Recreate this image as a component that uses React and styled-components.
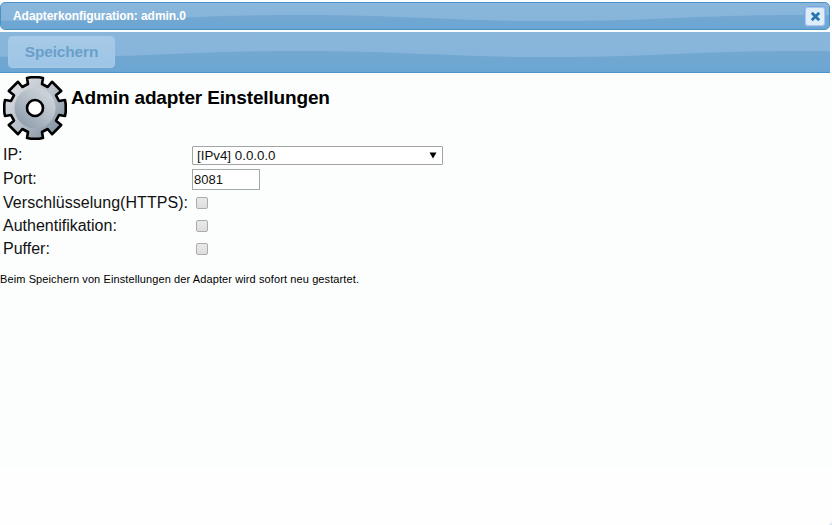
import React from "react";
import styled, { createGlobalStyle, css } from "styled-components";

const GlobalStyle = createGlobalStyle`
  * { box-sizing: border-box; }
  html, body { margin: 0; padding: 0; background: #fcfefd; overflow: hidden; }
  body { font-family: "Liberation Sans", Arial, sans-serif; color: #111; }
`;

const Dialog = styled.div`
  position: relative;
  display: flex;
  flex-direction: column;
  width: 832px;
  height: 525px;
  padding-top: 2px;
  background: linear-gradient(#fcfefd 465px, #fefefe 475px);
`;

const barSurface = css`
  position: relative;
  isolation: isolate;
  overflow: hidden;
  width: 830px;
  flex: none;
  display: flex;
  align-items: center;
  background: linear-gradient(#8ab6db, #85b4da);
`;

const TitleBar = styled.header`
  ${barSurface}
  height: 28px;
  border: 1px solid #4b92c5;
  border-radius: 5px;
  padding: 0 4px 0 12px;
  justify-content: space-between;
`;

const Toolbar = styled.div`
  ${barSurface}
  height: 41px;
  margin-top: 2px;
  padding: 0 8px;
  border-bottom: 1px solid #4d93c5;
`;

const WaveSvg = styled.svg`
  position: absolute;
  z-index: -1;
  left: 0;
  top: 0;
`;

const Title = styled.span`
  font-size: 12px;
  line-height: 14px;
  font-weight: bold;
  letter-spacing: -0.06px;
  color: #fff;
`;

const CloseButton = styled.button`
  width: 22px;
  height: 21px;
  margin: 0 -1px 0 0;
  padding: 0;
  display: flex;
  align-items: center;
  justify-content: center;
  border: 1px solid #7ba4e4;
  border-radius: 4px;
  background: #deedf8;
  box-shadow: inset 0 0 0 1px #a9c8f0;
`;

const SaveButton = styled.button`
  width: 107px;
  height: 32px;
  padding: 0;
  border: 1px solid #a4c9e8;
  border-radius: 4px;
  background: linear-gradient(#a6cae7, #9ec5e6);
  color: #6a9fca;
  font: bold 15.5px/18px "Liberation Sans", Arial, sans-serif;
  letter-spacing: -0.15px;
`;

const Heading = styled.div`
  display: flex;
  height: 70px;
  padding: 3px 0 0 3px;
`;

const HeadingText = styled.h1`
  margin: 11px 0 0 4px;
  font-size: 19px;
  line-height: 22px;
  font-weight: bold;
  letter-spacing: -0.15px;
  white-space: nowrap;
  color: #000;
`;

const Form = styled.form`
  display: grid;
  grid-template-columns: 189px 260px;
  grid-template-rows: 24px 24px 23px 23px 23px;
  align-items: center;
  padding-left: 3px;
`;

const Label = styled.label`
  font-size: 16px;
  line-height: 20px;
  white-space: nowrap;
  letter-spacing: ${({ $tracking = 0 }) => $tracking}px;
`;

const SelectBox = styled.div`
  display: flex;
  align-items: center;
  justify-content: space-between;
  width: 251px;
  height: 19px;
  padding: 0 5px 0 4px;
  border: 1px solid #a3a5a4;
  border-radius: 1px;
  background: #fff;
  font-size: 13.33px;
`;

const PortInput = styled.input`
  width: 68px;
  height: 21px;
  margin: 1px 0 0;
  padding: 0 1px;
  border: 1px solid #a4aaa8;
  background: #fff;
  color: #111;
  font: 13px "Liberation Sans", Arial, sans-serif;
`;

const Checkbox = styled.input.attrs({ type: "checkbox" })`
  appearance: none;
  width: 12px;
  height: 12px;
  margin: 1px 0 0 4px;
  border: 1px solid #acacac;
  border-radius: 2px;
  background: linear-gradient(#e9e9e9, #dedede);
`;

const Note = styled.p`
  margin: 12px 0 0;
  font-size: 11px;
  line-height: 14px;
  letter-spacing: 0.105px;
  color: #000;
`;

const ResizeGrip = styled.span`
  position: absolute;
  right: 0;
  bottom: 0;
  width: 4px;
  height: 4px;
  background: linear-gradient(135deg, transparent 45%, #b8d7e8);
`;

function Wave({ id, height, crest, trough }) {
  const d =
    `M-200 ${crest} C-90 ${crest} -60 ${trough} 50 ${trough}` +
    ` S190 ${crest} 300 ${crest} S440 ${trough} 550 ${trough}` +
    ` S690 ${crest} 800 ${crest} S940 ${trough} 1050 ${trough}` +
    ` V${height} H-200Z`;
  return (
    <WaveSvg width="830" height={height} aria-hidden="true">
      <defs>
        <linearGradient id={id} gradientUnits="userSpaceOnUse" x1="0" y1={crest} x2="0" y2={height}>
          <stop offset="0" stopColor="#73a8d1" />
          <stop offset="1" stopColor="#6ba6d3" />
        </linearGradient>
      </defs>
      <path d={d} fill={`url(#${id})`} />
    </WaveSvg>
  );
}

// Teeth on the axes are a little wider than the diagonal ones.
const AXIS_TOOTH = [[-7, -24], [-8, -30], [-4, -30.7], [4, -30.7], [8, -30], [7, -24]];
const DIAGONAL_TOOTH = [[-5.9, -23.8], [-6.5, -30.6], [6.5, -30.6], [5.9, -23.8]];

function gearOutline() {
  const points = [];
  for (let i = 0; i < 8; i += 1) {
    const a = (i * Math.PI) / 4;
    (i % 2 ? DIAGONAL_TOOTH : AXIS_TOOTH).forEach(([x, y]) => {
      const px = x * Math.cos(a) - y * Math.sin(a);
      const py = x * Math.sin(a) + y * Math.cos(a);
      points.push(`${px.toFixed(2)} ${py.toFixed(2)}`);
    });
  }
  return `M${points.join("L")}Z`;
}

function Gear() {
  return (
    <svg width="64" height="64" viewBox="-32 -32 64 64" overflow="visible" aria-hidden="true">
      <defs>
        <linearGradient id="gear-outer" x1="0" y1="0" x2="1" y2="1">
          <stop offset="0.1" stopColor="#dde0e4" />
          <stop offset="0.5" stopColor="#b9c1ca" />
          <stop offset="0.9" stopColor="#7f8fa0" />
        </linearGradient>
        <linearGradient id="gear-disc" x1="0.1" y1="0.9" x2="0.8" y2="0.1">
          <stop offset="0" stopColor="#8c9bab" />
          <stop offset="0.5" stopColor="#b0bac4" />
          <stop offset="1" stopColor="#ced4da" />
        </linearGradient>
      </defs>
      <path d={gearOutline()} fill="url(#gear-outer)" stroke="#000" strokeWidth="2.6" strokeLinejoin="round" />
      <circle r="20.5" fill="url(#gear-disc)" />
      <circle r="8" fill="#fff" stroke="#000" strokeWidth="2.6" />
    </svg>
  );
}

export default function App() {
  return (
    <>
      <GlobalStyle />
      <Dialog>
        <TitleBar>
          <Wave id="title-wave" height={26} crest={12} trough={18} />
          <Title>Adapterkonfiguration: admin.0</Title>
          <CloseButton aria-label="close">
            <svg width="9" height="9" viewBox="0 0 9 9">
              <path d="M1.8 1.8L7.2 7.2M7.2 1.8L1.8 7.2" stroke="#2675b3" strokeWidth="2.8" strokeLinecap="square" />
            </svg>
          </CloseButton>
        </TitleBar>
        <Toolbar>
          <Wave id="tool-wave" height={40} crest={19} trough={25} />
          <SaveButton disabled>Speichern</SaveButton>
        </Toolbar>
        <Heading>
          <Gear />
          <HeadingText>Admin adapter Einstellungen</HeadingText>
        </Heading>
        <Form>
          <Label>IP:</Label>
          <SelectBox>
            [IPv4] 0.0.0.0
            <svg width="8" height="7" viewBox="0 0 8 7">
              <path d="M0.5 0.5H7.5L4 6.5Z" fill="#000" />
            </svg>
          </SelectBox>
          <Label>Port:</Label>
          <PortInput defaultValue="8081" />
          <Label $tracking={0.04}>Verschlüsselung(HTTPS):</Label>
          <Checkbox />
          <Label>Authentifikation:</Label>
          <Checkbox />
          <Label>Puffer:</Label>
          <Checkbox />
        </Form>
        <Note>Beim Speichern von Einstellungen der Adapter wird sofort neu gestartet.</Note>
        <ResizeGrip />
      </Dialog>
    </>
  );
}
